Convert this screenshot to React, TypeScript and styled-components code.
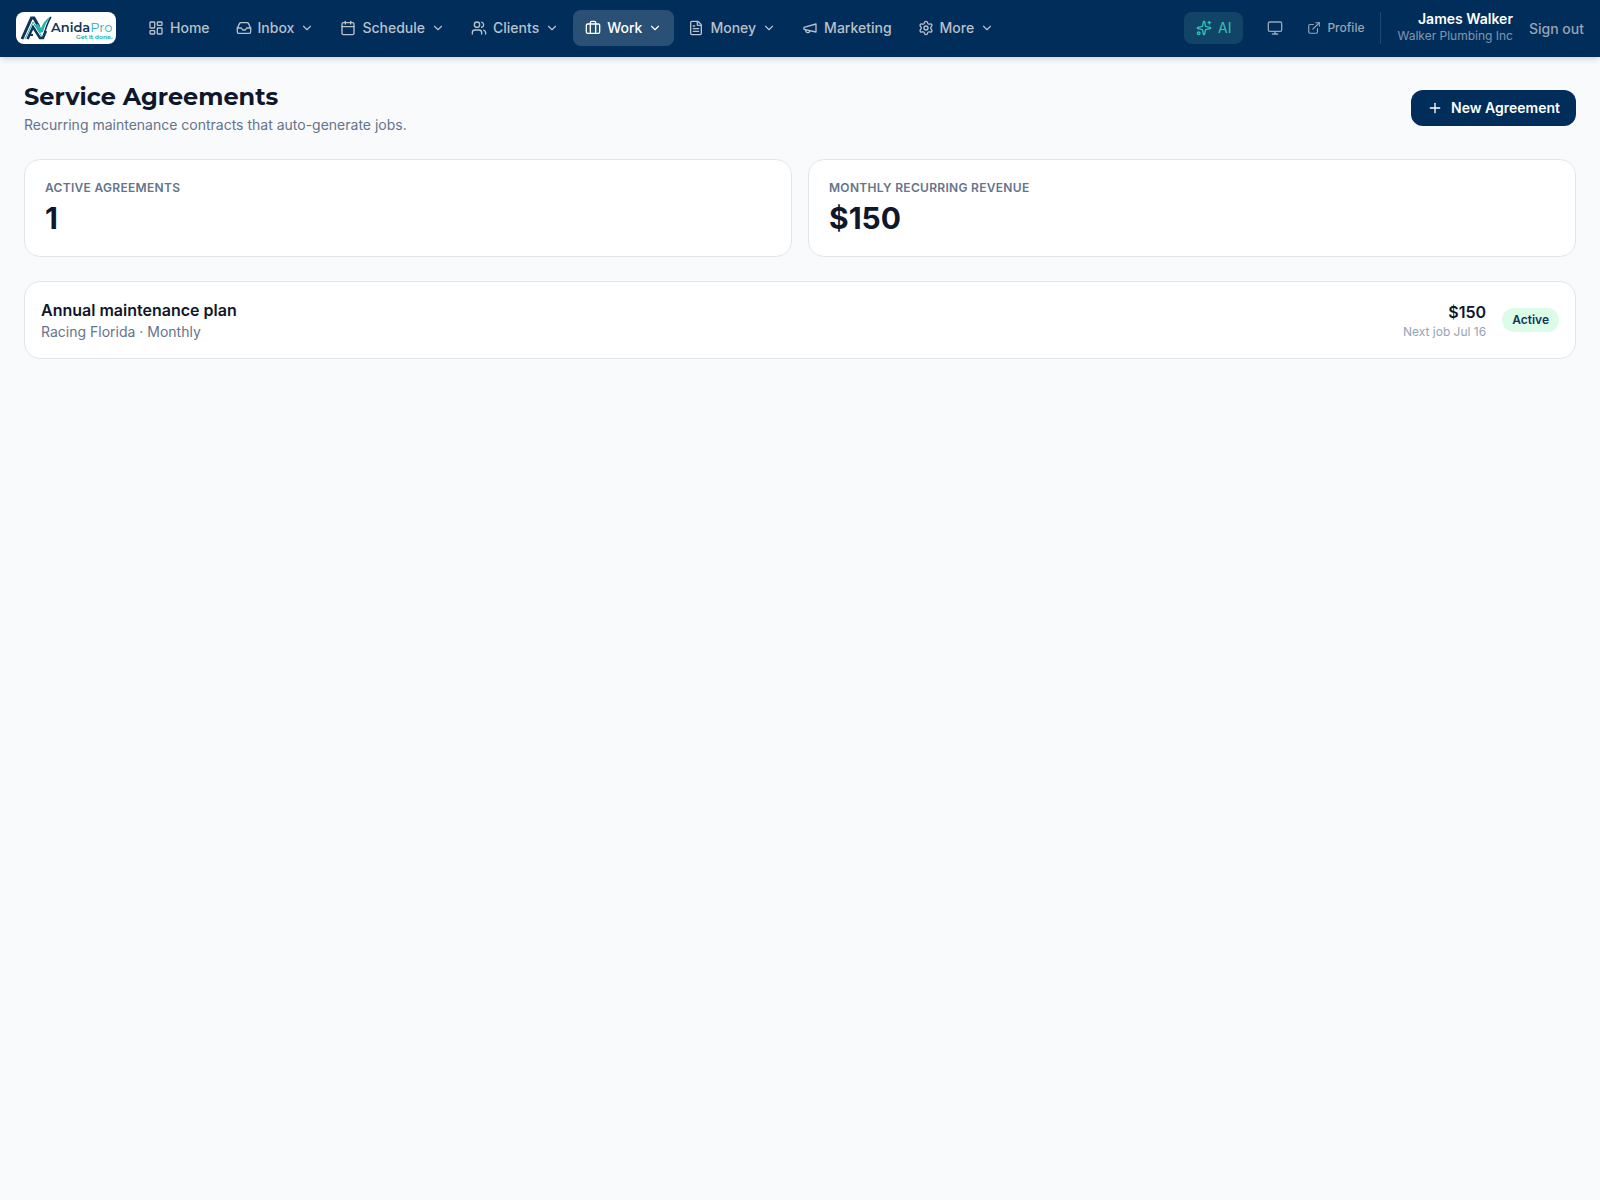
import React from "react";
import styled, { createGlobalStyle, css } from "styled-components";
import {
  Briefcase,
  Calendar,
  ChevronDown,
  ExternalLink,
  FileText,
  Inbox,
  LayoutDashboard,
  Monitor,
  Plus,
  Settings,
  Sparkles,
  Users,
} from "lucide-react";

const GlobalStyle = createGlobalStyle`
  *, *::before, *::after { box-sizing: border-box; }
  body {
    margin: 0;
    background: #f9fafc;
    color: #0f172a;
    font-family: Inter, "Liberation Sans", sans-serif;
    font-size: 14px;
    line-height: 20px;
  }
  h1, h2, p, dl, dt, dd, ul { margin: 0; padding: 0; }
  button { font: inherit; border: 0; background: none; cursor: pointer; }
  a { color: inherit; text-decoration: none; }
  svg { flex: none; }
`;

const Header = styled.header`
  display: flex;
  align-items: center;
  padding: 10px 16px;
  background: #002d5a;
  border-bottom: 1px solid #002d5a;
  color: #fff;
  box-shadow: 0 4px 6px -1px rgba(0, 0, 0, 0.1), 0 2px 4px -2px rgba(0, 0, 0, 0.1);
`;

const Logo = styled.a`
  display: flex;
  align-items: center;
  width: 100px;
  height: 32px;
  padding-left: 4px;
  background: #fff;
  border-radius: 8px;
  overflow: hidden;
`;

const Wordmark = styled.span`
  display: flex;
  flex-direction: column;
  align-items: flex-end;
  margin-left: -1px;
  padding-top: 4px;
  color: #12345c;
  font-family: Montserrat, Inter, sans-serif;
  font-size: 13px;
  font-weight: 600;
  line-height: 14px;
`;

const WordmarkAccent = styled.span`
  color: #27b5ab;
  font-weight: 400;
`;

const Tagline = styled.span`
  color: #1fb8a8;
  font-size: 6px;
  font-weight: 700;
  line-height: 6px;
`;

const Nav = styled.nav`
  display: flex;
  gap: 2px;
  margin-left: 20px;
`;

const navItem = css<{ $active?: boolean }>`
  display: flex;
  align-items: center;
  gap: 6px;
  height: 36px;
  padding: 0 12px;
  border-radius: 8px;
  font-weight: 500;
  color: ${(p) => (p.$active ? "#fff" : "#b9c1c9")};
  background: ${(p) => (p.$active ? "rgba(255, 255, 255, 0.17)" : "transparent")};
`;

const NavLink = styled.a<{ $active?: boolean }>`
  ${navItem}
`;

const NavButton = styled.button<{ $active?: boolean }>`
  ${navItem}
`;

const Tools = styled.div`
  display: flex;
  align-items: center;
  margin-left: auto;
`;

const AiButton = styled.button`
  display: flex;
  align-items: center;
  gap: 6px;
  height: 32px;
  padding: 0 12px;
  border-radius: 8px;
  background: #124468;
  color: #2ec4b6;
`;

const IconButton = styled.button`
  display: flex;
  padding: 8px;
  margin-left: 16px;
  color: #99a5b2;
`;

const ProfileLink = styled.a`
  display: flex;
  align-items: center;
  gap: 6px;
  margin: 0 16px;
  color: #99a5b2;
  font-size: 12px;
  font-weight: 500;
`;

const Account = styled.div`
  display: flex;
  flex-direction: column;
  gap: 2px;
  padding-left: 16px;
  border-left: 1px solid rgba(255, 255, 255, 0.12);
  text-align: right;
`;

const AccountName = styled.span`
  font-weight: 600;
  line-height: 14px;
`;

const AccountCompany = styled.span`
  color: rgba(255, 255, 255, 0.5);
  font-size: 12px;
  line-height: 16px;
`;

const SignOut = styled.button`
  padding: 2px 0 0;
  margin-left: 16px;
  color: #99a5b2;
  font-weight: 500;
`;

const Main = styled.main`
  display: flex;
  flex-direction: column;
  gap: 24px;
  padding: 24px;
`;

const PageHeader = styled.div`
  display: flex;
  align-items: center;
  justify-content: space-between;
  gap: 16px;
`;

const Title = styled.h1`
  font-family: Montserrat, Inter, sans-serif;
  font-size: 24px;
  font-weight: 700;
  line-height: 32px;
`;

const Subtitle = styled.p`
  margin-top: 2px;
  color: #64748b;
`;

const PrimaryButton = styled.button`
  display: flex;
  align-items: center;
  gap: 8px;
  height: 36px;
  padding: 0 16px;
  border-radius: 12px;
  background: #002d5a;
  color: #fff;
  font-weight: 600;
`;

const Stats = styled.dl`
  display: grid;
  grid-template-columns: repeat(2, 1fr);
  gap: 16px;
`;

const card = css`
  background: #fff;
  border: 1px solid #e2e5ea;
  border-radius: 16px;
`;

const StatCard = styled.div`
  ${card}
  padding: 20px;
`;

const StatLabel = styled.dt`
  color: #64748b;
  font-size: 12px;
  font-weight: 600;
  letter-spacing: 0.025em;
  line-height: 16px;
  text-transform: uppercase;
`;

const StatValue = styled.dd`
  margin-top: 4px;
  font-size: 30px;
  font-weight: 700;
  line-height: 36px;
`;

const AgreementList = styled.ul`
  ${card}
  list-style: none;
`;

const AgreementRow = styled.a`
  display: flex;
  align-items: center;
  gap: 16px;
  padding: 16px;
`;

const AgreementInfo = styled.div`
  flex: 1;
`;

const AgreementName = styled.p`
  font-size: 16px;
  font-weight: 600;
  line-height: 24px;
`;

const AgreementMeta = styled.p`
  color: #64748b;
`;

const AgreementPrice = styled.div`
  text-align: right;
`;

const NextJob = styled.p`
  color: #94a3b8;
  font-size: 12px;
  line-height: 16px;
`;

const Badge = styled.span`
  padding: 4px 10px;
  border-radius: 12px;
  background: #dcfce7;
  color: #12345c;
  font-size: 12px;
  font-weight: 600;
  line-height: 16px;
`;

function MegaphoneIcon({ size = 16 }: { size?: number }) {
  return (
    <svg
      width={size}
      height={size}
      viewBox="0 0 24 24"
      fill="none"
      stroke="currentColor"
      strokeWidth="2"
      strokeLinecap="round"
      strokeLinejoin="round"
      aria-hidden="true"
    >
      <path d="m3 11 18-5v12L3 14v-3z" />
      <path d="M11.6 16.8a3 3 0 1 1-5.8-1.6" />
    </svg>
  );
}

function LogoMark() {
  return (
    <svg width="32" height="26" viewBox="0 0 32 26" fill="none" aria-hidden="true">
      <path d="M2 24 11.500 3h2.500l5 9" stroke="#12345c" strokeWidth="3" />
      <path d="M7.500 24 13 12l7 11h3l3-7" stroke="#12345c" strokeWidth="2.500" />
      <path d="M9 20h4" stroke="#12345c" strokeWidth="2" />
      <path d="M5 24 13 7l9 15" stroke="#27b5ab" strokeWidth="1" />
      <path d="m14 10 6 8 3-1C25 10 27 6 31 1c-5 3-8 7-10 12l-3-4Z" fill="#27b5ab" />
      <path d="M31 2c-4 6-5 12-8 20" stroke="#12345c" strokeWidth="1.500" />
    </svg>
  );
}

type NavEntry = {
  label: string;
  icon: React.ElementType;
  menu?: boolean;
  active?: boolean;
};

const navEntries: NavEntry[] = [
  { label: "Home", icon: LayoutDashboard },
  { label: "Inbox", icon: Inbox, menu: true },
  { label: "Schedule", icon: Calendar, menu: true },
  { label: "Clients", icon: Users, menu: true },
  { label: "Work", icon: Briefcase, menu: true, active: true },
  { label: "Money", icon: FileText, menu: true },
  { label: "Marketing", icon: MegaphoneIcon },
  { label: "More", icon: Settings, menu: true },
];

const stats = [
  { label: "Active agreements", value: "1" },
  { label: "Monthly recurring revenue", value: "$150" },
];

export default function App() {
  return (
    <>
      <GlobalStyle />
      <Header>
        <Logo href="#">
          <LogoMark />
          <Wordmark>
            <span>
              Anida<WordmarkAccent>Pro</WordmarkAccent>
            </span>
            <Tagline>Get it done.</Tagline>
          </Wordmark>
        </Logo>
        <Nav>
          {navEntries.map(({ label, icon: Icon, menu, active }) =>
            menu ? (
              <NavButton key={label} type="button" $active={active}>
                <Icon size={16} />
                {label}
                <ChevronDown size={14} />
              </NavButton>
            ) : (
              <NavLink key={label} href="#">
                <Icon size={16} />
                {label}
              </NavLink>
            )
          )}
        </Nav>
        <Tools>
          <AiButton type="button">
            <Sparkles size={16} />
            AI
          </AiButton>
          <IconButton type="button" aria-label="Display">
            <Monitor size={16} />
          </IconButton>
          <ProfileLink href="#">
            <ExternalLink size={14} />
            Profile
          </ProfileLink>
          <Account>
            <AccountName>James Walker</AccountName>
            <AccountCompany>Walker Plumbing Inc</AccountCompany>
          </Account>
          <SignOut type="button">Sign out</SignOut>
        </Tools>
      </Header>
      <Main>
        <PageHeader>
          <div>
            <Title>Service Agreements</Title>
            <Subtitle>Recurring maintenance contracts that auto-generate jobs.</Subtitle>
          </div>
          <PrimaryButton type="button">
            <Plus size={16} />
            New Agreement
          </PrimaryButton>
        </PageHeader>
        <Stats>
          {stats.map((stat) => (
            <StatCard key={stat.label}>
              <StatLabel>{stat.label}</StatLabel>
              <StatValue>{stat.value}</StatValue>
            </StatCard>
          ))}
        </Stats>
        <AgreementList>
          <li>
            <AgreementRow href="#">
              <AgreementInfo>
                <AgreementName>Annual maintenance plan</AgreementName>
                <AgreementMeta>Racing Florida · Monthly</AgreementMeta>
              </AgreementInfo>
              <AgreementPrice>
                <AgreementName>$150</AgreementName>
                <NextJob>Next job Jul 16</NextJob>
              </AgreementPrice>
              <Badge>Active</Badge>
            </AgreementRow>
          </li>
        </AgreementList>
      </Main>
    </>
  );
}
